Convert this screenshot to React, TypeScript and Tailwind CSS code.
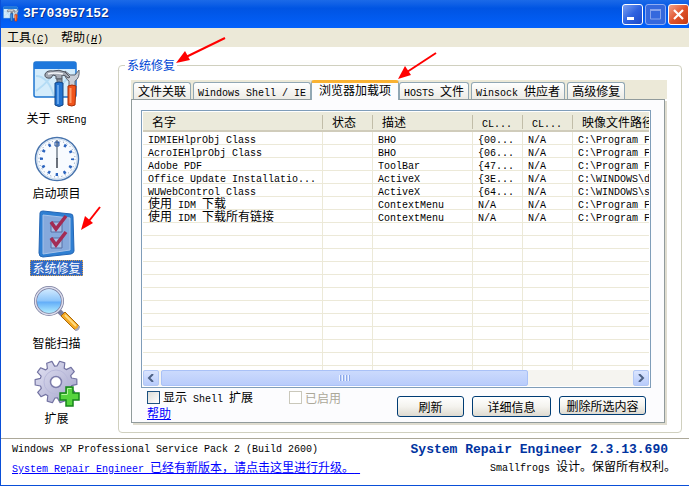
import { useState } from "react"
import type { ReactNode } from "react"
import clsx from "clsx"

const tabs = ["文件关联", "Windows Shell / IE", "浏览器加载项", "HOSTS 文件", "Winsock 供应者", "高级修复"]

const columns = ["名字", "状态", "描述", "CL...", "CL...", "映像文件路径"]

const addons = [
  ["IDMIEHlprObj Class", "", "BHO", "{00...", "N/A", "C:\\Program F"],
  ["AcroIEHlprObj Class", "", "BHO", "{06...", "N/A", "C:\\Program F"],
  ["Adobe PDF", "", "ToolBar", "{47...", "N/A", "C:\\Program F"],
  ["Office Update Installatio...", "", "ActiveX", "{3E...", "N/A", "C:\\WINDOWS\\d"],
  ["WUWebControl Class", "", "ActiveX", "{64...", "N/A", "C:\\WINDOWS\\s"],
  ["使用 IDM 下载", "", "ContextMenu", "N/A", "N/A", "C:\\Program F"],
  ["使用 IDM 下载所有链接", "", "ContextMenu", "N/A", "N/A", "C:\\Program F"],
]

const blankRows = Array.from({ length: 12 }, () => ["", "", "", "", "", ""])

// Latin letters take half the width of a Chinese character
const latin = "font-['Liberation_Mono',monospace] text-[10px] leading-none"

function Mixed({ text }: { text: string }) {
  return (
    <span className="whitespace-pre">
      {text.split(/([\u3000-\u9fff\uff00-\uffef]+)/).map((part, i) =>
        i % 2 ? part : part && <span key={i} className={latin}>{part}</span>
      )}
    </span>
  )
}

function ToolsIcon({ className }: { className?: string }) {
  return (
    <svg viewBox="0 0 48 48" className={className} aria-hidden="true">
      <rect x="1" y="2" width="42" height="35" rx="2" fill="#d4ecfb" stroke="#1d74cf" strokeWidth="1.5" />
      <path d="M1 4q0-2 2-2h38q2 0 2 2v5H1z" fill="#1e78dc" />
      <path d="M3 31Q18 20 22 10M3 16q12 0 18 20M24 36Q28 20 42 14" fill="none" stroke="#b4dcf5" strokeWidth="2" />
      <path d="M32 11q-1 7 4 10v8h6v-8q5-3 4-11l-4 5h-5z" fill="#c9ced6" stroke="#606773" />
      <path d="M35 26q4-2 8 0l-1 19q-3 2-7 0z" fill="#f1541b" stroke="#a52f08" />
      <path d="M37.5 28v15" stroke="#ff9a66" strokeWidth="2" />
      <path d="M12 14q2-4 8-3 6-2 12 1l5 5-2 1q-3-3-6-3v4h-6v-3l-3-1-2 3q-7 1-6-4z" fill="#a3a9b3" stroke="#4d535d" />
      <path d="M15 14q6-2 15 0" stroke="#f3f5f8" strokeWidth="1.5" fill="none" />
      <path d="M24 19h5v5h-5z" fill="#8f959f" stroke="#565c66" />
      <path d="M22 23q4-2 8 0v22q-4 3-8 0z" fill="#2272cf" stroke="#134686" />
      <path d="M25 25v19" stroke="#78b5f5" strokeWidth="1.5" />
    </svg>
  )
}

function ClockIcon() {
  return (
    <svg viewBox="0 0 48 48" className="size-12" aria-hidden="true">
      <circle cx="24" cy="24" r="21.5" fill="#f8fbff" stroke="#4874ad" strokeWidth="1.500" />
      <circle cx="24" cy="24" r="20" fill="none" stroke="#c6d8ec" />
      <circle cx="24" cy="24" r="18" fill="none" stroke="#7f96b4" strokeWidth="1" strokeDasharray="1 2.77" />
      <circle cx="24" cy="24" r="15.5" fill="none" stroke="#2d65bf" strokeWidth="3" strokeDasharray="2.5 5.615" strokeDashoffset="1.25" />
      <path d="M24 5v19" stroke="#75808f" strokeWidth="1.5" />
      <path d="M22 7h4v4h-4z" fill="none" stroke="#1c4fa0" />
      <path d="M24 23v10" stroke="#3b4350" strokeWidth="1.5" />
    </svg>
  )
}

function ChecklistIcon() {
  return (
    <svg viewBox="0 0 48 48" className="size-12" aria-hidden="true">
      <path d="M7 3q0-2 3-2l28 3q2 0 2 3l1 34q0 2-3 3l-28 3q-4 0-4-4z" fill="#2f7fd2" stroke="#2365b5" />
      <path d="M10 5l27 3v32l-27 4z" fill="#86a9dc" stroke="#a6c3ea" />
      <path d="M18 12h11v10H18zM18 28h11v10H18z" fill="#a8bfe4" stroke="#566fa5" />
      <path d="M18 12l5 7L33 6M18 28l5 7 10-13" fill="none" stroke="#a32c54" strokeWidth="3.5" />
    </svg>
  )
}

function SearchIcon() {
  return (
    <svg viewBox="0 0 48 48" className="size-12" aria-hidden="true">
      <defs>
        <linearGradient id="lens" x1="0" y1="0" x2="0" y2="1">
          <stop offset="0" stopColor="#d9eeff" />
          <stop offset=".48" stopColor="#8fc6fa" />
          <stop offset=".55" stopColor="#65aff8" />
          <stop offset="1" stopColor="#baf4ff" />
        </linearGradient>
      </defs>
      <path d="M26 26l6 6" stroke="#7b7fa0" strokeWidth="5" />
      <path d="M28 31l4-4 13 13q2 2 0 4t-4 0z" fill="#f6ab25" stroke="#a9680c" />
      <path d="M32 30l11 11" stroke="#ffdc83" strokeWidth="2" />
      <path d="M42 45q4 0 4-4" stroke="#a7a7bc" strokeWidth="2" fill="none" />
      <circle cx="16" cy="16" r="13.5" fill="url(#lens)" stroke="#787c9e" strokeWidth="3" />
      <circle cx="16" cy="16" r="13.5" fill="none" stroke="#dcdeed" strokeWidth="1.5" />
    </svg>
  )
}

// Outline of a cog with ten teeth
const cogPath = Array.from({ length: 10 }, (_, tooth) =>
  [[-0.24, 16], [-0.13, 21], [0.13, 21], [0.24, 16]].map(([offset, radius]) => {
    const angle = (tooth * Math.PI) / 5 + offset + 0.3
    return `${(23 + radius * Math.sin(angle)).toFixed(1)},${(22 - radius * Math.cos(angle)).toFixed(1)}`
  })
).flat().join(" ")

function GearIcon() {
  return (
    <svg viewBox="0 0 48 48" className="size-12" aria-hidden="true">
      <defs>
        <linearGradient id="gear" x1="0" y1="0" x2="1" y2="1">
          <stop offset="0" stopColor="#e3e3f4" />
          <stop offset="1" stopColor="#a3a3c9" />
        </linearGradient>
      </defs>
      <polygon points={cogPath} fill="url(#gear)" stroke="#7373a2" strokeWidth="1.2" strokeLinejoin="round" />
      <circle cx="23" cy="22" r="12" fill="none" stroke="#b9b9da" />
      <circle cx="23" cy="22" r="5.5" fill="#fff" stroke="#7d7dab" strokeWidth="1.5" />
      <path d="M33 27h7v6h6v7h-6v6h-7v-6h-6v-7h6z" fill="#56d43e" stroke="#16851b" strokeWidth="1.5" />
      <path d="M34.500 34v-5.500h4M28.500 34.500h6" fill="none" stroke="#b4f79d" />
    </svg>
  )
}

const navItems = [
  { label: "关于 SREng", icon: <ToolsIcon className="size-12" /> },
  { label: "启动项目", icon: <ClockIcon /> },
  { label: "系统修复", icon: <ChecklistIcon /> },
  { label: "智能扫描", icon: <SearchIcon /> },
  { label: "扩展", icon: <GearIcon /> },
]

function PushButton({ children, className }: { children: ReactNode; className?: string }) {
  return (
    <button
      className={clsx(
        "flex items-center justify-center rounded-[3px] border border-[#003c74] bg-linear-to-b from-white via-[#f4f3ee] to-[#dedad0] leading-none",
        className
      )}
    >
      {children}
    </button>
  )
}

function ScrollArrow({ label, d }: { label: string; d: string }) {
  return (
    <button aria-label={label} className="flex h-4 w-4 items-center justify-center rounded-[2px] border border-[#b3c8f5] bg-linear-to-b from-[#dbe5fe] to-[#b7cbfb]">
      <svg viewBox="0 0 8 8" className="size-2" aria-hidden="true">
        <path d={d} fill="none" stroke="#4d6185" strokeWidth="2" />
      </svg>
    </button>
  )
}

export default function App() {
  const [active, setActive] = useState(2)
  const [page, setPage] = useState(2)

  return (
    <div className="flex min-h-screen flex-col border-b border-l border-[#0a4fd8] bg-white font-['Noto_Sans_CJK_SC',sans-serif] text-[12px] leading-[14px] text-black">
      {/* Title bar */}
      <header className="flex h-7 items-center gap-1 bg-linear-to-b from-[#1b6ae8] via-[#0054e3] via-30% to-[#0361fb] pl-[2px]">
        <ToolsIcon className="size-4" />
        <h1 className="flex-1 font-['Liberation_Mono',monospace] text-[13px] leading-4 font-bold text-white [text-shadow:1px_1px_#0a2f86]">3F703957152</h1>
        <div className="flex gap-[2px]">
          <button aria-label="最小化" className="size-[21px] rounded-[3px] border border-white bg-linear-to-br from-[#7d9ff0] via-[#2f63e0] to-[#1c49c8]">
            <svg viewBox="0 0 19 19" aria-hidden="true">
              <path d="M4 12h7v3H4z" fill="#fff" />
            </svg>
          </button>
          <button aria-label="最大化" disabled className="size-[21px] rounded-[3px] border border-[#8fadf3] bg-[#3568dd]">
            <svg viewBox="0 0 19 19" aria-hidden="true">
              <path d="M4.500 5h10v9h-10z" fill="none" stroke="#86a3ec" />
              <path d="M4 5h11" stroke="#86a3ec" strokeWidth="2" />
            </svg>
          </button>
          <button aria-label="关闭" className="size-[21px] rounded-[3px] border border-white bg-linear-to-br from-[#f0a088] via-[#e0532b] to-[#c43a12]">
            <svg viewBox="0 0 19 19" aria-hidden="true">
              <path d="M5 5l9 9M14 5l-9 9" stroke="#fff" strokeWidth="2.200" />
            </svg>
          </button>
        </div>
      </header>

      {/* Menu */}
      <nav className="flex h-[19px] items-center gap-3 bg-[#ece9d8] pl-[6px]">
        <button>工具<span className={latin}>(<u className="italic">C</u>)</span></button>
        <button>帮助<span className={latin}>(<u className="italic">H</u>)</span></button>
      </nav>

      <main className="flex flex-1 pt-[11px]">
        {/* Pages */}
        <aside className="flex w-[117px] shrink-0 flex-col pt-[2px] pr-[6px]">
          {navItems.map((item, i) => (
            <button key={item.label} onClick={() => setPage(i)} className="relative flex h-[75px] flex-col items-center gap-[2px]">
              {item.icon}
              <span
                className={clsx(
                  "border border-dotted px-[1px]",
                  i === page ? "border-[#d8a04c] bg-[#316ac5] text-white" : "border-transparent"
                )}
              >
                <Mixed text={item.label} />
              </span>
              {i === 2 && (
                <svg viewBox="0 0 20 24" className="absolute -top-1 right-[11px] h-6 w-5" aria-hidden="true">
                  <path d="M19 1L8 15" stroke="#f00" strokeWidth="2" />
                  <path d="M0 24l4-14 8 7z" fill="#f00" />
                </svg>
              )}
            </button>
          ))}
        </aside>

        <fieldset className="mr-[7px] mb-[5px] flex min-w-0 flex-1 flex-col rounded-[4px] border border-[#d0d0bf] pt-2 pr-[14px] pb-[9px] pl-3">
          <legend className="relative -ml-[6px] px-[2px] text-[#0046d5]">
            系统修复
            <svg viewBox="0 0 50 26" className="absolute -top-[21px] left-[51px] h-[26px] w-[50px]" aria-hidden="true">
              <path d="M49 1L10 20" stroke="#f00" strokeWidth="2" />
              <path d="M0 26l9-12 5 9z" fill="#f00" />
            </svg>
          </legend>

          <div role="tablist" className="flex h-[19px] items-end gap-[2px] bg-[#ece9d8] pl-[2px]">
            {tabs.map((tab, i) => (
              <button
                key={tab}
                role="tab"
                aria-selected={i === active}
                onClick={() => setActive(i)}
                className={clsx(
                  "relative rounded-t-[3px] border border-b-0 border-[#91a7b4] whitespace-nowrap",
                  i === active
                    ? "z-10 -mx-[2px] -mb-px h-5 border-t-[3px] border-t-[#f9b233] bg-[#fcfcfe] px-[7px] pb-1"
                    : "h-[17px] bg-linear-to-b from-white to-[#ecebe5] px-1"
                )}
              >
                <Mixed text={tab} />
                {i === 2 && (
                  <svg viewBox="0 0 39 28" className="absolute -top-[31px] -right-[39px] h-7 w-[39px]" aria-hidden="true">
                    <path d="M38 1L9 20" stroke="#f00" strokeWidth="2" />
                    <path d="M0 27l7-13 6 9z" fill="#f00" />
                  </svg>
                )}
              </button>
            ))}
          </div>

          <div role="tabpanel" className="mr-[2px] flex flex-1 flex-col border border-[#919b9c] bg-[#fcfcfe] pt-[10px] pr-[13px] pl-[9px] shadow-[2px_2px_#dfdccf]">
            <div className="border border-[#7f9db9] bg-white p-px">
              <div className="h-[258px] overflow-hidden">
                <table className="w-full table-fixed border-collapse">
                  <colgroup>
                    <col className="w-[180px]" />
                    <col className="w-[50px]" />
                    <col className="w-[100px]" />
                    <col className="w-[50px]" />
                    <col className="w-[50px]" />
                    <col />
                  </colgroup>
                  <thead>
                    <tr className="h-5 bg-[#ebeadb] shadow-[inset_0_-2px_#d0ccbb]">
                      {columns.map((name, i) => (
                        <th key={i} className="p-0 text-left font-normal">
                          <div className={clsx("h-[14px] pl-[9px]", i < 5 && "border-r border-[#c1bda8]")}>
                            <Mixed text={name} />
                          </div>
                        </th>
                      ))}
                    </tr>
                  </thead>
                  <tbody>
                    {[...addons, ...blankRows].map((row, r) => (
                      <tr key={r}>
                        {row.map((cell, c) => (
                          <td key={c} className="p-0">
                            <div className={clsx("h-[13px] border-b border-[#ece9d8] pl-[5px] leading-[12px]", c < 5 && "border-r")}>
                              <Mixed text={cell} />
                            </div>
                          </td>
                        ))}
                      </tr>
                    ))}
                  </tbody>
                </table>
              </div>
              {/* Horizontal scroll bar */}
              <div className="flex h-4 gap-[2px] bg-[#f5f4f0]">
                <ScrollArrow label="向左" d="M6 0L2 4l4 4" />
                <div className="flex-1">
                  <div className="flex h-4 w-[78%] items-center justify-center gap-px rounded-[2px] border border-[#a9c1f7] bg-linear-to-b from-[#cbdafd] to-[#b9ccfb]">
                    {[0, 1, 2, 3].map((n) => (
                      <span key={n} className="h-[6px] w-[2px] border-r border-[#8ca9ea] bg-[#eef4fe]" />
                    ))}
                  </div>
                </div>
                <ScrollArrow label="向右" d="M2 0l4 4-4 4" />
              </div>
            </div>

            <div className="flex justify-between pt-[2px] pr-[5px] pl-[6px]">
              <div>
                <div className="flex gap-9">
                  <label className="flex items-center gap-[3px]">
                    <input type="checkbox" className="size-[13px] appearance-none border border-[#1c5180] bg-linear-to-br from-[#dcdcd7] to-white checked:bg-[#21a121]" />
                    <Mixed text="显示 Shell 扩展" />
                  </label>
                  <label className="flex items-center gap-[3px] text-[#aca899]">
                    <input type="checkbox" disabled className="size-[13px] appearance-none border border-[#cac8bb] bg-white" />
                    <span>已启用</span>
                  </label>
                </div>
                <a href="#help" className="mt-px block w-fit text-[#0000ff] underline">帮助</a>
              </div>
              <div className="flex gap-2 pt-[6px]">
                <PushButton className="h-[21px] w-[67px]">刷新</PushButton>
                <PushButton className="h-[21px] w-[79px]">详细信息</PushButton>
                <PushButton className="h-[19px] w-[87px]">删除所选内容</PushButton>
              </div>
            </div>
          </div>
        </fieldset>
      </main>

      <footer className="flex h-[47px] justify-between border-t border-[#aca899] pt-px pl-[11px] pr-[13px]">
        <div className="flex flex-col gap-[5px]">
          <p><Mixed text="Windows XP Professional Service Pack 2 (Build 2600)" /></p>
          <a href="#update" className="text-[#0000ff] underline">
            <Mixed text="System Repair Engineer 已经有新版本，请点击这里进行升级。 " />
          </a>
        </div>
        <div className="flex flex-col items-end gap-[2px] pt-[3px]">
          <strong className="mr-2 font-['Liberation_Mono',monospace] text-[13px] text-[#0033a0]">System Repair Engineer 2.3.13.690</strong>
          <p><Mixed text="Smallfrogs 设计。保留所有权利。" /></p>
        </div>
      </footer>
    </div>
  )
}
